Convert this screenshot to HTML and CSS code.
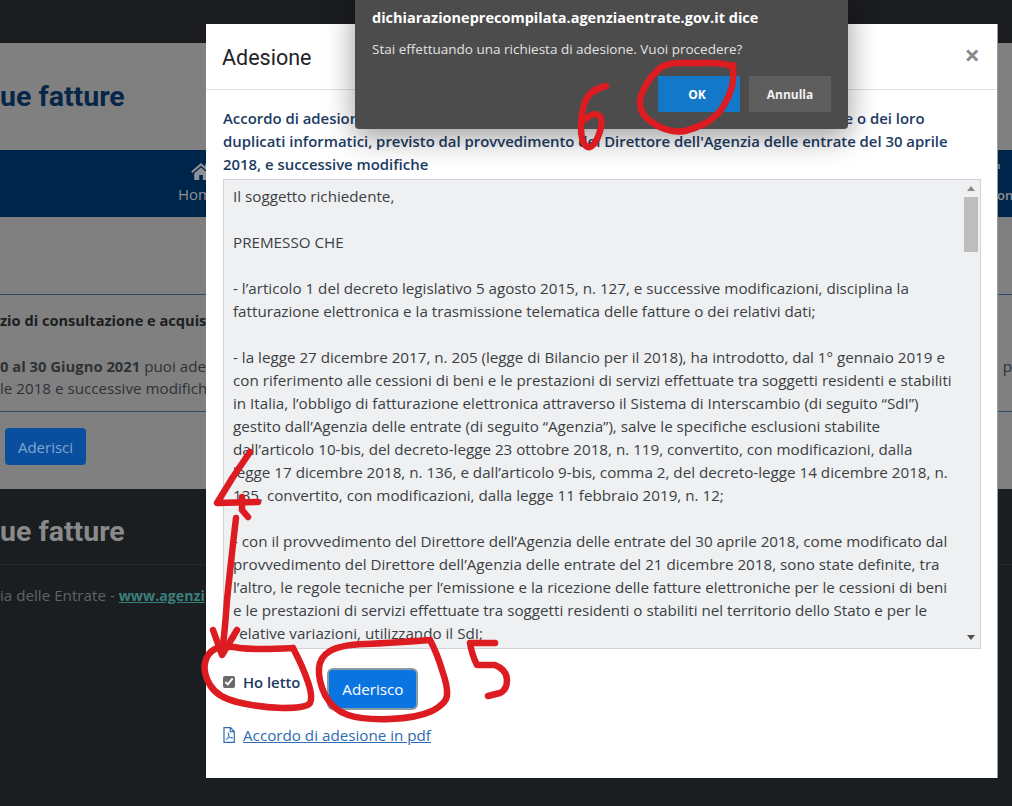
FILE: index.html
```html
<!DOCTYPE html>
<html lang="it">
    <head>
        <meta charset="UTF-8">
        <title>Adesione</title>
        <link rel="stylesheet" href="styles.css">
    </head>
    <body>
        <div class="page">
            <div class="top-strip"></div>
            <div class="brand"><h1 class="brand-title">ue fatture</h1></div>
            <nav class="nav">
                <div class="nav-item">
                    <svg class="nav-icon" viewBox="0 0 24 20"><path d="M12 1 1 10.500l1.500 1.700L12 4.200l9.500 8 1.500-1.700L19.500 7.500V2.500h-3v2.500zM4.500 12.500V20h5.500v-5.500h4V20h5.500v-7.500L12 6.200z"/></svg>
                    <span>Hom</span>
                </div>
                <div class="nav-end">
                    <span class="nav-dot"></span>
                    <span>on</span>
                </div>
            </nav>
            <main class="content">
                <div class="notice">
                    <h2 class="notice-title">zio di consultazione e acquis</h2>
                    <p class="notice-text"><span><b>0 al 30 Giugno 2021</b> puoi ade</span><span>l p</span></p>
                    <p class="notice-text notice-second">le 2018 e successive modifich</p>
                </div>
                <button class="btn-bg">Aderisci</button>
            </main>
            <footer class="footer">
                <div class="footer-title">ue fatture</div>
                <p class="footer-text">ia delle Entrate - <a href="#">www.agenzi</a></p>
            </footer>
        </div>

        <div class="modal">
            <div class="modal-header">
                <h3 class="modal-title">Adesione</h3>
                <span class="modal-close">&times;</span>
            </div>
            <div class="modal-body">
                <h4 class="accordo-title">Accordo di adesione al servizio di consultazione e acquisizione delle fatture elettroniche o dei loro<br>duplicati informatici, previsto dal provvedimento del Direttore dell'Agenzia delle entrate del 30 aprile<br>2018, e successive modifiche</h4>
                <div class="accordo-box">
                    <div class="accordo-text">Il soggetto richiedente,

PREMESSO CHE

- l’articolo 1 del decreto legislativo 5 agosto 2015, n. 127, e successive modificazioni, disciplina la
fatturazione elettronica e la trasmissione telematica delle fatture o dei relativi dati;

- la legge 27 dicembre 2017, n. 205 (legge di Bilancio per il 2018), ha introdotto, dal 1° gennaio 2019 e
con riferimento alle cessioni di beni e le prestazioni di servizi effettuate tra soggetti residenti e stabiliti
in Italia, l’obbligo di fatturazione elettronica attraverso il Sistema di Interscambio (di seguito “SdI”)
gestito dall’Agenzia delle entrate (di seguito “Agenzia”), salve le specifiche esclusioni stabilite
dall’articolo 10-bis, del decreto-legge 23 ottobre 2018, n. 119, convertito, con modificazioni, dalla
legge 17 dicembre 2018, n. 136, e dall’articolo 9-bis, comma 2, del decreto-legge 14 dicembre 2018, n.
135, convertito, con modificazioni, dalla legge 11 febbraio 2019, n. 12;

- con il provvedimento del Direttore dell’Agenzia delle entrate del 30 aprile 2018, come modificato dal
provvedimento del Direttore dell’Agenzia delle entrate del 21 dicembre 2018, sono state definite, tra
l’altro, le regole tecniche per l’emissione e la ricezione delle fatture elettroniche per le cessioni di beni
e le prestazioni di servizi effettuate tra soggetti residenti o stabiliti nel territorio dello Stato e per le
relative variazioni, utilizzando il SdI;</div>
                    <div class="scrollbar">
                        <span class="arrow-up"></span>
                        <span class="thumb"></span>
                        <span class="arrow-down"></span>
                    </div>
                </div>
                <div class="accordo-actions">
                    <label class="ho-letto"><input type="checkbox" checked> Ho letto</label>
                    <button class="btn-aderisco">Aderisco</button>
                </div>
                <a class="pdf-link" href="#">
                    <svg class="pdf-icon" viewBox="0 0 12 16"><path d="M1 .7h6.500L11.300 4.500V15.300H1zM7.300 .7V4.700H11.300" fill="none" stroke="currentColor" stroke-width="1.200"/><path d="M3 12.800c1.500-1 3.200-4.500 2.900-6.500-.2-1-.9-.8-.8.300.2 2 2 4.500 4 4.700.8 0 .8-.8 0-.9-2-.2-4.500.7-6.100 2.400z" fill="none" stroke="currentColor" stroke-width=".8"/></svg>
                    <span>Accordo di adesione in pdf</span>
                </a>
            </div>
        </div>

        <div class="dialog">
            <div class="dialog-title">dichiarazioneprecompilata.agenziaentrate.gov.it dice</div>
            <div class="dialog-msg">Stai effettuando una richiesta di adesione. Vuoi procedere?</div>
            <div class="dialog-buttons">
                <button class="btn-ok">OK</button>
                <button class="btn-cancel">Annulla</button>
            </div>
        </div>

        <!-- segni a mano sopra lo screenshot -->
        <svg class="marks" viewBox="0 0 1012 806">
            <path d="M733 67Q726 63 710 63Q693 63 678 63Q663 63 655 73Q646 83 642 93Q638 103 642 112Q646 120 660 127Q673 133 685 131Q696 128 706 123Q716 117 723 107Q729 97 732 87Q734 77 733 65"/>
            <path d="M606 86Q589 90 585 102Q581 113 581 127Q581 140 585 145Q589 150 594 144Q599 137 601 127Q603 117 598 115Q593 112 584 120"/>
            <path d="M250 452L233 477L217 503L258 502"/>
            <path d="M242 497L242 510L248 517"/>
            <path d="M236 518Q230 570 227 600Q225 630 222 653"/>
            <path d="M213 630L222 655L237 630"/>
            <path d="M293 648Q257 650 240 648Q223 645 215 649Q207 653 205 663Q203 673 210 685Q217 697 237 702Q257 707 282 708Q307 708 310 703Q313 697 308 682Q303 667 293 648"/>
            <path d="M430 640Q390 643 365 644Q340 645 330 651Q320 657 319 668Q318 680 325 695Q333 710 348 715Q363 720 390 719Q417 718 432 711Q447 703 447 695Q448 687 442 670Q437 653 430 640"/>
            <path d="M495 643L470 643Q472 655 477 665L495 665Q507 670 507 680Q507 690 500 693L488 696"/>
        </svg>
    </body>
</html>
```

FILE: styles.css
```css
* {
    box-sizing: border-box;
}
body {
    margin: 0;
    width: 1012px;
    height: 806px;
    position: relative;
    overflow: hidden;
    font-family: "Open Sans", "Noto Sans", sans-serif;
    font-size: 14px;
    color: #212529;
}
p, h1, h2, h3, h4 {
    margin: 0;
}
button {
    font-family: inherit;
    border: none;
}

/* pagina dietro al modal */
.page {
    display: flex;
    flex-direction: column;
    height: 806px;
    background-color: #808080;
    overflow: hidden;
}
.top-strip {
    height: 43px;
    background-color: #1b1c1f;
}
.brand {
    height: 107px;
    padding-top: 36px;
}
.brand-title {
    font-family: "Roboto", sans-serif;
    font-size: 28.500px;
    line-height: 36px;
    font-weight: 700;
    color: #062648;
    white-space: nowrap;
}
.nav {
    display: flex;
    justify-content: space-between;
    height: 67px;
    background-color: #00254a;
    padding-left: 178px;
    color: #8e9296;
}
.nav-item {
    display: flex;
    flex-direction: column;
    align-items: center;
    width: 34px;
    padding-top: 12px;
    font-size: 15px;
    gap: 4px;
}
.nav-icon {
    width: 22px;
    height: 18px;
    margin-left: 12px;
    fill: #8e9296;
}
.nav-end {
    display: flex;
    flex-direction: column;
    width: 15px;
    padding-top: 14px;
    font-size: 13px;
    font-weight: 600;
    line-height: 22px;
}
.nav-dot {
    width: 3px;
    height: 5px;
    margin-bottom: 15px;
    background-color: #5f6f83;
}
.content {
    height: 272px;
}
.notice {
    margin-top: 77px;
    height: 118px;
    border-top: 1px solid #2f4a6b;
    border-bottom: 1px solid #2f4a6b;
    padding-top: 14px;
    white-space: nowrap;
}
.notice-title {
    font-size: 14.600px;
    line-height: 22px;
    font-weight: 700;
    color: #1b1e21;
}
.notice-text {
    display: flex;
    justify-content: space-between;
    margin-top: 24px;
    font-size: 15.200px;
    line-height: 22px;
    color: #2e3236;
}
.notice-text b {
    font-size: 14.800px;
}
.notice-second {
    margin-top: 0;
}
.btn-bg {
    display: block;
    margin: 16px 0 0 5px;
    width: 81px;
    height: 37px;
    border-radius: 4px;
    background-color: #0a4f9e;
    color: #7ea6d1;
    font-size: 15px;
}
.footer {
    flex: 1;
    background-color: #1b1e21;
    white-space: nowrap;
}
.footer-title {
    height: 76px;
    padding-top: 25px;
    font-family: "Roboto", sans-serif;
    font-size: 28.500px;
    line-height: 36px;
    font-weight: 700;
    color: #8a8a8a;
    border-bottom: 1px solid #26292c;
}
.footer-text {
    margin-top: 19px;
    font-size: 15.200px;
    line-height: 22px;
    color: #5f6366;
}
.footer-text a {
    font-size: 14.200px;
    color: #3b7f7a;
    font-weight: 700;
}

/* modal */
.modal {
    position: absolute;
    left: 206px;
    top: 24px;
    width: 792px;
    height: 754px;
    background-color: #fff;
    border-right: 1px solid #9a9a9a;
}
.modal-header {
    display: flex;
    justify-content: space-between;
    align-items: center;
    height: 66px;
    padding: 0 17px 0 16px;
    border-bottom: 1px solid #dee2e6;
}
.modal-title {
    font-family: "Roboto", sans-serif;
    font-size: 21.500px;
    font-weight: 400;
    color: #1f2327;
    margin-top: 2px;
}
.modal-close {
    font-size: 27px;
    line-height: 27px;
    font-weight: 700;
    color: #8a8a8a;
    margin-bottom: 5px;
}
.modal-body {
    padding: 17px 16px 0 17px;
}
.accordo-title {
    font-size: 14.900px;
    line-height: 23px;
    font-weight: 600;
    color: #1c3b63;
    white-space: nowrap;
}
.accordo-box {
    display: flex;
    width: 758px;
    height: 470px;
    margin-top: 3px;
    border: 1px solid #ced4da;
    background-color: #eff0f2;
    overflow: hidden;
}
.accordo-text {
    flex: 1;
    padding: 5px 0 0 9px;
    font-size: 15.200px;
    line-height: 23px;
    color: #3a3f44;
    white-space: pre;
    overflow: hidden;
}
.scrollbar {
    display: flex;
    flex-direction: column;
    align-items: center;
    width: 17px;
    padding: 6px 2px 8px 0;
}
.thumb {
    width: 14px;
    height: 55px;
    margin-top: 6px;
    background-color: #bdbdbd;
}
.arrow-up, .arrow-down {
    width: 0;
    height: 0;
    border-left: 4px solid transparent;
    border-right: 4px solid transparent;
}
.arrow-up {
    border-bottom: 5px solid #8a8a8a;
}
.arrow-down {
    margin-top: auto;
    border-top: 5px solid #505050;
}
.accordo-actions {
    display: flex;
    align-items: center;
    margin-top: 20px;
    height: 40px;
}
.ho-letto {
    display: flex;
    align-items: center;
    gap: 8px;
    font-size: 14.800px;
    font-weight: 600;
    color: #1c3b63;
    margin-top: -14px;
}
.ho-letto input {
    margin: 0;
    width: 12px;
    height: 12px;
    accent-color: #6a6a6a;
}
.btn-aderisco {
    margin-left: 29px;
    width: 87px;
    height: 38px;
    border-radius: 4px;
    background-color: #0a74e0;
    color: #fff;
    font-size: 15.200px;
    box-shadow: 0 0 0 2px #8a9aa5;
}
.pdf-link {
    display: flex;
    align-items: center;
    gap: 8px;
    margin-top: 15px;
    color: #2f6bb0;
    font-size: 15.200px;
    line-height: 22px;
}
.pdf-link span {
    text-decoration: underline;
}
.pdf-icon {
    width: 12px;
    height: 16px;
}

/* alert del browser */
.dialog {
    position: absolute;
    left: 355px;
    top: -6px;
    width: 493px;
    height: 135px;
    padding: 14px 17px 0;
    border-radius: 0 0 4px 4px;
    background-color: #4c4c4c;
    box-shadow: 0 8px 30px rgba(0, 0, 0, 0.4);
    color: #fff;
}
.dialog-title {
    font-size: 14.500px;
    line-height: 20px;
    font-weight: 700;
}
.dialog-msg {
    margin-top: 11px;
    font-size: 13.500px;
    line-height: 20px;
    color: #e2e2e2;
}
.dialog-buttons {
    display: flex;
    justify-content: flex-end;
    gap: 9px;
    margin-top: 17px;
}
.btn-ok, .btn-cancel {
    width: 82px;
    height: 36px;
    font-size: 12px;
    font-weight: 700;
    color: #fff;
}
.btn-ok {
    padding-right: 10px;
    background-color: #1478c8;
}
.btn-cancel {
    background-color: #5e5e5e;
    color: #f0f0f0;
}

.marks {
    position: absolute;
    left: 0;
    top: 0;
    width: 1012px;
    height: 806px;
    fill: none;
    stroke: #dd1c22;
    stroke-width: 6.500;
    stroke-linecap: round;
    stroke-linejoin: round;
}
```
